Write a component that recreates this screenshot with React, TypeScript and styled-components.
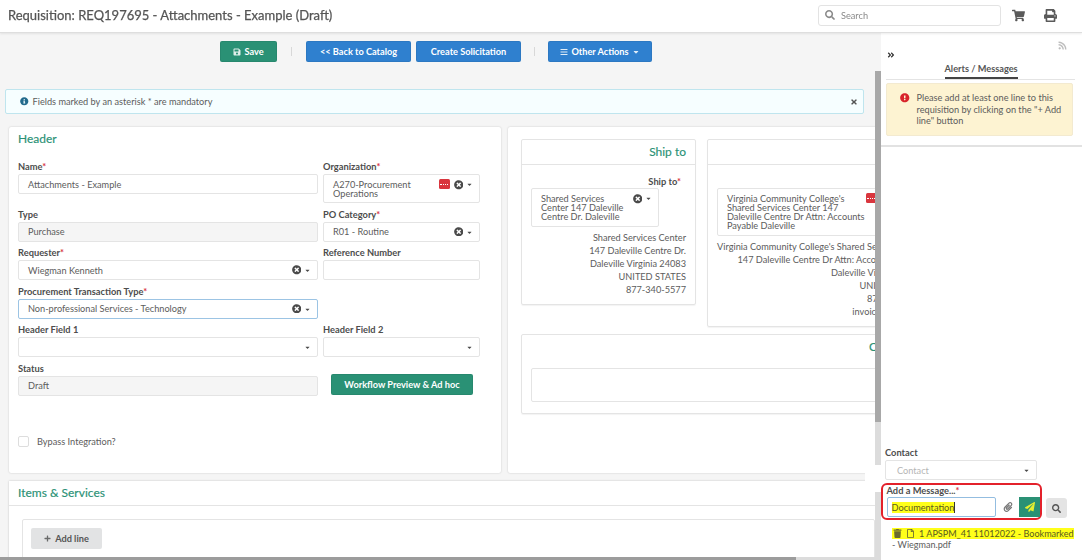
import React from "react"
import styled, { createGlobalStyle } from "styled-components"
import {
  FaAngleDoubleRight,
  FaBars,
  FaCaretDown,
  FaExclamationCircle,
  FaInfoCircle,
  FaPaperclip,
  FaPaperPlane,
  FaPlus,
  FaPrint,
  FaRegFile,
  FaRss,
  FaSave,
  FaSearch,
  FaShoppingCart,
  FaTimes,
  FaTimesCircle,
  FaTrash,
} from "react-icons/fa"

const TEAL = "#2a9175"
const BLUE = "#2f80cf"
const TEXT = "#5c5c5c"
const LINE = "#e4e4e4"

const GlobalStyle = createGlobalStyle`
  html, body {
    margin: 0;
    padding: 0;
    height: 100%;
    overflow: hidden;
    background: #fff;
  }
  body {
    font-family: Lato, "Liberation Sans", sans-serif;
    font-size: 9.2px;
    color: ${TEXT};
  }
`

const Page = styled.div`
  width: 1082px;
  height: 560px;
  display: flex;
  flex-direction: column;
  overflow: hidden;
  filter: blur(0.45px);
`

const TopBar = styled.header`
  height: 33px;
  flex: none;
  display: flex;
  align-items: center;
  padding: 0 25px 2px 8px;
  box-sizing: border-box;
  background: #fff;
  border-bottom: 1px solid #dedede;
  box-shadow: 0 1px 2px rgba(0, 0, 0, 0.08);
  position: relative;
  z-index: 2;
`

const Title = styled.h1`
  margin: 0;
  flex: 1;
  font-size: 13px;
  font-weight: 400;
  color: #555;
  -webkit-text-stroke: 0.25px #555;
  white-space: nowrap;
`

const SearchBox = styled.div`
  width: 183px;
  height: 21px;
  box-sizing: border-box;
  border: 1px solid #e3e3e3;
  border-radius: 3px;
  display: flex;
  align-items: center;
  gap: 6px;
  padding-left: 6px;
  color: #8a8a8a;
  svg {
    font-size: 10px;
  }
`

const TopIcon = styled.span<{ $gap: number }>`
  margin-left: ${(p) => p.$gap}px;
  display: flex;
  font-size: 13px;
  color: #5a5a5a;
`

const Body = styled.div`
  flex: 1;
  min-height: 0;
  display: flex;
`

const Work = styled.div`
  width: 875px;
  flex: none;
  display: flex;
  flex-direction: column;
  background: #f5f5f5;
  min-height: 0;
`

const Viewport = styled.main`
  flex: 1;
  min-height: 0;
  overflow: hidden;
`

const HScroll = styled.div`
  height: 3px;
  flex: none;
  background: #dcdcdc;
`

const HThumb = styled.div`
  width: 796px;
  height: 100%;
  background: #9c9c9c;
`

const VScroll = styled.div`
  width: 6px;
  flex: none;
  display: flex;
  flex-direction: column;
  position: relative;
`

const VPiece = styled.div<{ $h?: number; $color: string }>`
  flex: ${(p) => (p.$h ? `0 0 ${p.$h}px` : "1")};
  background: ${(p) => p.$color};
`

/* white patch the annotation left over the page edge */
const ErasedPatch = styled.div`
  position: absolute;
  right: 100%;
  top: 432px;
  width: 10px;
  height: 16px;
  background: #fff;
`

const Toolbar = styled.div`
  display: flex;
  justify-content: center;
  align-items: center;
  padding: 8px 3px 0 0;
  height: 21px;
`

const Btn = styled.button<{ $color: string; $w: number }>`
  width: ${(p) => p.$w}px;
  height: 21px;
  padding: 0;
  border: 1px solid rgba(0, 0, 0, 0.06);
  border-radius: 2px;
  background: ${(p) => p.$color};
  color: #fff;
  font: 700 9.2px Lato, sans-serif;
  display: inline-flex;
  align-items: center;
  justify-content: center;
  gap: 3px;
  svg {
    font-size: 8px;
    opacity: 0.85;
  }
`

const BtnGroup = styled.div`
  display: flex;
  gap: 5px;
`

const Divider = styled.span<{ $left: number; $right: number }>`
  width: 1px;
  height: 9px;
  background: #d8d8d8;
  margin: 0 ${(p) => p.$right}px 0 ${(p) => p.$left}px;
`

const Notice = styled.div`
  margin: 27px 11px 13px 5px;
  height: 25px;
  box-sizing: border-box;
  border: 1px solid #bfe5ee;
  border-radius: 2px;
  background: #f6feff;
  display: flex;
  align-items: center;
  padding: 0 5px 0 14px;
  gap: 4px;
  svg {
    font-size: 8.5px;
    color: #226a8c;
  }
`

const NoticeText = styled.span`
  flex: 1;
`

const Close = styled(FaTimes)`
  && {
    color: #555;
    font-size: 8px;
  }
`

const Columns = styled.div`
  display: flex;
  gap: 7px;
  padding-left: 9px;
  height: 346px;
`

const Panel = styled.section<{ $w: number }>`
  width: ${(p) => p.$w}px;
  flex: none;
  box-sizing: border-box;
  background: #fff;
  border-radius: 2px;
  box-shadow: 0 0 2px rgba(0, 0, 0, 0.2);
`

const HeaderPanel = styled(Panel)`
  padding: 0 0 0 9px;
`

const SectionTitle = styled.h2`
  margin: 0;
  padding-top: 2px;
  font-size: 12px;
  line-height: 20px;
  font-weight: 400;
  -webkit-text-stroke: 0.15px ${TEAL};
  color: ${TEAL};
`

const FormGrid = styled.div`
  display: grid;
  grid-template-columns: 300px 157px;
  column-gap: 5px;
  row-gap: 5.5px;
  align-items: start;
  margin-top: 12px;
`

const FieldWrap = styled.div``

const Label = styled.label`
  display: block;
  height: 13px;
  line-height: 11px;
  font-weight: 700;
  font-size: 9.3px;
  color: #4d4d4d;
  em {
    color: #d9333f;
    font-style: normal;
  }
`

const Box = styled.div<{ $h?: number; $w?: number; $gray?: boolean; $focus?: boolean }>`
  height: ${(p) => p.$h ?? 20}px;
  width: ${(p) => (p.$w ? `${p.$w}px` : "auto")};
  box-sizing: border-box;
  display: flex;
  align-items: ${(p) => (p.$h ? "flex-start" : "center")};
  padding: ${(p) => (p.$h ? "5px 4px 0 9px" : "0 4px 0 9px")};
  background: ${(p) => (p.$gray ? "#f5f5f5" : "#fff")};
  border: 1px solid ${(p) => (p.$focus ? "#9cc4e4" : LINE)};
  border-radius: 2px;
`

const BoxText = styled.span<{ $wrap?: boolean }>`
  flex: 1;
  line-height: 9px;
  white-space: ${(p) => (p.$wrap ? "normal" : "nowrap")};
`

const ClearIcon = styled(FaTimesCircle)`
  font-size: 9.5px;
  color: #4a4a4a;
  flex: none;
`

const Caret = styled(FaCaretDown)`
  font-size: 7px;
  color: #4a4a4a;
  flex: none;
  margin: 1px 2px 0 3px;
`

const Tag = styled.span`
  flex: none;
  width: 11px;
  height: 10px;
  margin: -1px 4px 0 0;
  background: #d9363e;
  border-radius: 1.5px;
  display: flex;
  align-items: center;
  justify-content: center;
  &::after {
    content: "";
    width: 8px;
    border-top: 1px dotted #fff;
  }
`

const WorkflowBtn = styled(Btn)`
  margin: 0 0 1px 8px;
  align-self: end;
`

const CheckRow = styled.div`
  display: flex;
  align-items: center;
  gap: 8px;
  margin-top: 40px;
`

const CheckBox = styled.span`
  width: 11px;
  height: 11px;
  box-sizing: border-box;
  border: 1px solid #ddd;
  border-radius: 2px;
`

const ShipPanel = styled(Panel)`
  padding: 12px 0 0 13px;
  display: flex;
  flex-direction: column;
  gap: 7px;
`

const ShipRow = styled.div`
  display: flex;
  gap: 11px;
  align-items: flex-start;
`

const ShipCard = styled.div<{ $w: number; $h: number }>`
  width: ${(p) => p.$w}px;
  height: ${(p) => p.$h}px;
  flex: none;
  box-sizing: border-box;
  border: 1px solid ${LINE};
  border-radius: 2px;
  box-shadow: 0 1px 1px rgba(0, 0, 0, 0.05);
`

const ShipHead = styled.div`
  height: 25px;
  box-sizing: border-box;
  border-bottom: 1px solid ${LINE};
  text-align: right;
  padding-right: 9px;
`

const ShipBody = styled.div`
  padding: 10px 9px 0 9px;
`

const ShipLabel = styled(Label)`
  text-align: right;
  padding: 1px 5px 0 0;
  height: 12px;
`

const Address = styled.div`
  margin-top: 4px;
  text-align: right;
  line-height: 13px;
  white-space: nowrap;
`

const ContactCard = styled(ShipCard)`
  padding: 0 9px;
  text-align: right;
`

const EmptyBox = styled.div`
  height: 32px;
  margin-top: 11px;
  border: 1px solid ${LINE};
  border-radius: 2px;
`

const ItemsPanel = styled.section`
  margin: 8px 0 0 9px;
  background: #fff;
  height: 100px;
  box-shadow: 0 0 2px rgba(0, 0, 0, 0.2);
`

const ItemsHead = styled.div`
  height: 24px;
  padding-left: 9px;
  border-bottom: 1px solid ${LINE};
`

const ItemsBody = styled.div`
  margin: 13px 0 0 13px;
  padding: 8px 0 0 8px;
  border: 1px solid ${LINE};
  border-radius: 2px;
  height: 60px;
`

const AddLine = styled(Btn)`
  color: #555;
  border: none;
  gap: 4px;
  svg {
    font-size: 7px;
  }
`

const Side = styled.aside`
  flex: 1;
  min-width: 0;
  display: flex;
  flex-direction: column;
  background: #fff;
  position: relative;
`

const RssRow = styled.div`
  display: flex;
  justify-content: flex-end;
  padding: 8px 15px 0 0;
  height: 9px;
  font-size: 9px;
  color: #bdbdbd;
`

const Collapse = styled.div`
  padding: 1px 0 0 6px;
  height: 10px;
  font-size: 8px;
  color: #333;
`

const Tabs = styled.div`
  margin: 0 7px 0 5px;
  height: 18px;
  text-align: center;
  border-bottom: 1px solid ${LINE};
`

const Tab = styled.span`
  display: inline-block;
  height: 18px;
  width: 73px;
  margin-left: 1px;
  line-height: 15px;
  font-weight: 700;
  white-space: nowrap;
  color: #555;
  border-bottom: 2px solid #444;
  box-sizing: border-box;
`

const Warning = styled.div`
  margin: 3px 9px 0 5px;
  height: 53px;
  box-sizing: border-box;
  background: #fdf3d2;
  border: 1px solid #f3ead0;
  border-radius: 2px;
  display: flex;
  gap: 7px;
  padding: 8px 4px 0 13px;
  line-height: 11.5px;
  svg {
    flex: none;
    font-size: 9.5px;
    color: #d8232a;
    margin-top: 1px;
  }
`

const SideRule = styled.div`
  margin-top: 9px;
  height: 2px;
  background: #e2e2e2;
`

const Bottom = styled.div`
  margin-top: auto;
  display: flex;
  flex-direction: column;
`

const ContactLabel = styled(Label)`
  margin-left: 4px;
  height: 13px;
`

const ContactSelect = styled(Box)`
  width: 152px;
  margin-left: 4px;
  padding-left: 11px;
  color: #b5b5b5;
`

const MessageRow = styled.div`
  display: flex;
  align-items: flex-end;
  margin-top: 3px;
`

const RedFrame = styled.div`
  width: 161px;
  height: 37px;
  box-sizing: border-box;
  border: 2px solid #e3212b;
  border-radius: 6px;
  padding: 0 0 0 3.5px;
  background: #fff;
`

const MessageLabel = styled(Label)`
  height: 12px;
  line-height: 11px;
`

const InputRow = styled.div`
  display: flex;
  align-items: center;
`

const MessageInput = styled.div`
  width: 110px;
  height: 20px;
  box-sizing: border-box;
  border: 1.5px solid #93bde0;
  border-radius: 2px;
  padding-left: 4px;
  display: flex;
  align-items: center;
`

const Highlight = styled.mark<{ $caret?: boolean }>`
  background: #ffff1a;
  color: #5a5a20;
  border-right: ${(p) => (p.$caret ? "1px solid #333" : "none")};
`

const ClipBtn = styled.span`
  width: 23px;
  display: flex;
  justify-content: center;
  font-size: 10px;
  color: #777;
`

const SendBtn = styled.span`
  width: 21px;
  height: 20px;
  display: flex;
  align-items: center;
  justify-content: center;
  background: ${TEAL};
  color: #e6ef30;
  font-size: 10px;
`

const LensBtn = styled.span`
  width: 21px;
  height: 20px;
  margin: 0 0 2px 4px;
  display: flex;
  align-items: center;
  justify-content: center;
  background: #e4e4e4;
  border-radius: 3px;
  color: #555;
  font-size: 9px;
`

const Attachment = styled.div`
  margin: 8px 0 0 11px;
  height: 32px;
  line-height: 11px;
  font-size: 9.05px;
  white-space: nowrap;
  mark {
    padding-left: 1px;
  }
  mark svg {
    font-size: 9px;
    vertical-align: -1px;
    color: #6a6a30;
    margin-right: 4px;
  }
`

type FieldProps = {
  label: string
  required?: boolean
  children: React.ReactNode
}

const Field: React.FC<FieldProps> = ({ label, required, children }) => (
  <FieldWrap>
    <Label>
      {label}
      {required && <em>*</em>}
    </Label>
    {children}
  </FieldWrap>
)

const App: React.FC = () => {
  return (
    <Page>
      <GlobalStyle />
      <TopBar>
        <Title>Requisition: REQ197695 - Attachments - Example (Draft)</Title>
        <SearchBox>
          <FaSearch />
          Search
        </SearchBox>
        <TopIcon $gap={11}>
          <FaShoppingCart />
        </TopIcon>
        <TopIcon $gap={19}>
          <FaPrint />
        </TopIcon>
      </TopBar>
      <Body>
        <Work>
          <Viewport>
            <Toolbar>
              <Btn $color={TEAL} $w={57}>
                <FaSave /> Save
              </Btn>
              <Divider $left={14} $right={14} />
              <BtnGroup>
                <Btn $color={BLUE} $w={105}>
                  &lt;&lt; Back to Catalog
                </Btn>
                <Btn $color={BLUE} $w={105}>
                  Create Solicitation
                </Btn>
              </BtnGroup>
              <Divider $left={13} $right={13} />
              <Btn $color={BLUE} $w={104}>
                <FaBars /> Other Actions <FaCaretDown />
              </Btn>
            </Toolbar>
            <Notice>
              <FaInfoCircle />
              <NoticeText>Fields marked by an asterisk * are mandatory</NoticeText>
              <Close />
            </Notice>
            <Columns>
              <HeaderPanel $w={492}>
                <SectionTitle>Header</SectionTitle>
                <FormGrid>
                  <Field label="Name" required>
                    <Box>
                      <BoxText>Attachments - Example</BoxText>
                    </Box>
                  </Field>
                  <Field label="Organization" required>
                    <Box $h={29}>
                      <BoxText $wrap>A270-Procurement Operations</BoxText>
                      <Tag />
                      <ClearIcon />
                      <Caret />
                    </Box>
                  </Field>
                  <Field label="Type">
                    <Box $gray>
                      <BoxText>Purchase</BoxText>
                    </Box>
                  </Field>
                  <Field label="PO Category" required>
                    <Box>
                      <BoxText>R01 - Routine</BoxText>
                      <ClearIcon />
                      <Caret />
                    </Box>
                  </Field>
                  <Field label="Requester" required>
                    <Box>
                      <BoxText>Wiegman Kenneth</BoxText>
                      <ClearIcon />
                      <Caret />
                    </Box>
                  </Field>
                  <Field label="Reference Number">
                    <Box />
                  </Field>
                  <Field label="Procurement Transaction Type" required>
                    <Box $focus>
                      <BoxText>Non-professional Services - Technology</BoxText>
                      <ClearIcon />
                      <Caret />
                    </Box>
                  </Field>
                  <span />
                  <Field label="Header Field 1">
                    <Box>
                      <BoxText />
                      <Caret />
                    </Box>
                  </Field>
                  <Field label="Header Field 2">
                    <Box>
                      <BoxText />
                      <Caret />
                    </Box>
                  </Field>
                  <Field label="Status">
                    <Box $gray>
                      <BoxText>Draft</BoxText>
                    </Box>
                  </Field>
                  <WorkflowBtn $color={TEAL} $w={142}>
                    Workflow Preview &amp; Ad hoc
                  </WorkflowBtn>
                </FormGrid>
                <CheckRow>
                  <CheckBox />
                  Bypass Integration?
                </CheckRow>
              </HeaderPanel>
              <ShipPanel $w={500}>
                <ShipRow>
                  <ShipCard $w={175} $h={166}>
                    <ShipHead>
                      <SectionTitle>Ship to</SectionTitle>
                    </ShipHead>
                    <ShipBody>
                      <ShipLabel>
                        Ship to<em>*</em>
                      </ShipLabel>
                      <Box $h={39} $w={128}>
                        <BoxText $wrap>Shared Services Center 147 Daleville Centre Dr. Daleville</BoxText>
                        <ClearIcon />
                        <Caret />
                      </Box>
                      <Address>
                        Shared Services Center
                        <br />
                        147 Daleville Centre Dr.
                        <br />
                        Daleville Virginia 24083
                        <br />
                        UNITED STATES
                        <br />
                        877-340-5577
                      </Address>
                    </ShipBody>
                  </ShipCard>
                  <ShipCard $w={230} $h={188}>
                    <ShipHead />
                    <ShipBody>
                      <ShipLabel />
                      <Box $h={48} $w={190}>
                        <BoxText $wrap>
                          Virginia Community College's Shared Services Center 147 Daleville Centre Dr Attn: Accounts
                          Payable Daleville
                        </BoxText>
                        <Tag />
                        <ClearIcon />
                        <Caret />
                      </Box>
                      <Address>
                        Virginia Community College's Shared Services Center
                        <br />
                        147 Daleville Centre Dr Attn: Accounts Payable
                        <br />
                        Daleville Virginia 24083
                        <br />
                        UNITED STATES
                        <br />
                        877-340-5577
                        <br />
                        invoices@vccs.edu
                      </Address>
                    </ShipBody>
                  </ShipCard>
                </ShipRow>
                <ContactCard $w={404} $h={80}>
                  <SectionTitle>Contract</SectionTitle>
                  <EmptyBox />
                </ContactCard>
              </ShipPanel>
            </Columns>
            <ItemsPanel>
              <ItemsHead>
                <SectionTitle>Items &amp; Services</SectionTitle>
              </ItemsHead>
              <ItemsBody>
                <AddLine $color="#e2e3e4" $w={71}>
                  <FaPlus /> Add line
                </AddLine>
              </ItemsBody>
            </ItemsPanel>
          </Viewport>
          <HScroll>
            <HThumb />
          </HScroll>
        </Work>
        <VScroll>
          <VPiece $h={38} $color="#f5f5f5" />
          <VPiece $h={351} $color="#a8a8a8" />
          <VPiece $h={43} $color="#dcdcdc" />
          <VPiece $h={27} $color="#fff" />
          <VPiece $color="#dcdcdc" />
          <ErasedPatch />
        </VScroll>
        <Side>
          <RssRow>
            <FaRss />
          </RssRow>
          <Collapse>
            <FaAngleDoubleRight />
          </Collapse>
          <Tabs>
            <Tab>Alerts / Messages</Tab>
          </Tabs>
          <Warning>
            <FaExclamationCircle />
            <span>Please add at least one line to this requisition by clicking on the "+ Add line" button</span>
          </Warning>
          <SideRule />
          <Bottom>
            <ContactLabel>Contact</ContactLabel>
            <ContactSelect>
              <BoxText>Contact</BoxText>
              <Caret />
            </ContactSelect>
            <MessageRow>
              <RedFrame>
                <MessageLabel>
                  Add a Message...<em>*</em>
                </MessageLabel>
                <InputRow>
                  <MessageInput>
                    <Highlight $caret>Documentation</Highlight>
                  </MessageInput>
                  <ClipBtn>
                    <FaPaperclip />
                  </ClipBtn>
                  <SendBtn>
                    <FaPaperPlane />
                  </SendBtn>
                </InputRow>
              </RedFrame>
              <LensBtn>
                <FaSearch />
              </LensBtn>
            </MessageRow>
            <Attachment>
              <Highlight>
                <FaTrash />
                <FaRegFile />1 APSPM_41 11012022 - Bookmarked
              </Highlight>
              <br />- Wiegman.pdf
            </Attachment>
          </Bottom>
        </Side>
      </Body>
    </Page>
  )
}

export default App
